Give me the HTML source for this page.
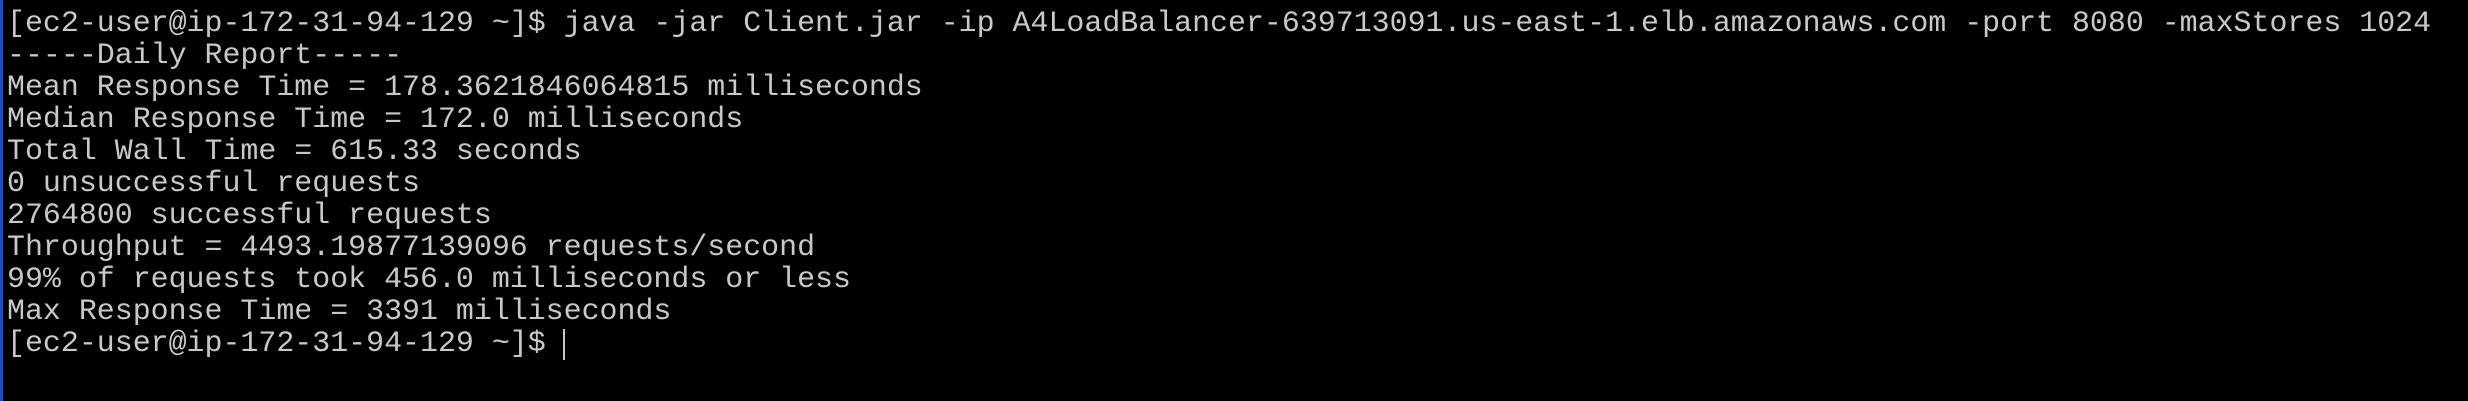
<!DOCTYPE html>
<html><head><meta charset="utf-8"><style>
html,body{margin:0;padding:0;background:#000;width:2468px;height:401px;overflow:hidden}
.strip{position:absolute;left:0;top:0;width:3px;height:401px;background:#1f4fa8}
pre{position:absolute;left:7px;top:7px;margin:0;font-family:"Liberation Mono",monospace;font-size:29.93px;line-height:32px;color:#c8c8c8}
.cur{position:absolute;left:563px;top:329px;width:2px;height:31px;background:#c8c8c8}
</style></head><body>
<div class="strip"></div>
<pre>[ec2-user@ip-172-31-94-129 ~]$ java -jar Client.jar -ip A4LoadBalancer-639713091.us-east-1.elb.amazonaws.com -port 8080 -maxStores 1024
-----Daily Report-----
Mean Response Time = 178.3621846064815 milliseconds
Median Response Time = 172.0 milliseconds
Total Wall Time = 615.33 seconds
0 unsuccessful requests
2764800 successful requests
Throughput = 4493.19877139096 requests/second
99% of requests took 456.0 milliseconds or less
Max Response Time = 3391 milliseconds
[ec2-user@ip-172-31-94-129 ~]$ </pre>
<div class="cur"></div>
</body></html>
